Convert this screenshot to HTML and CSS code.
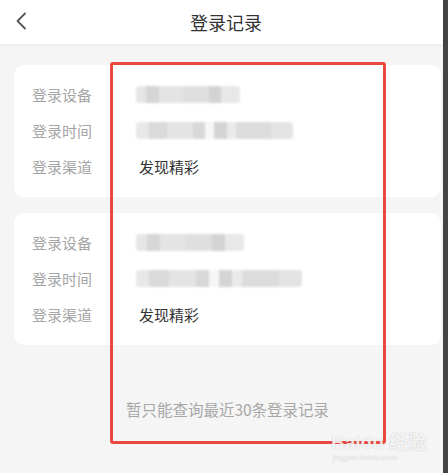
FILE: index.html
```html
<!DOCTYPE html>
<html lang="zh-CN">
<head>
    <meta charset="UTF-8">
    <meta name="viewport" content="width=device-width, initial-scale=1.0">
    <title>登录记录</title>
    <link rel="stylesheet" href="styles.css">
</head>
<body>
    <div class="screen">
        <header class="topbar">
            <svg class="back" width="12" height="18" viewBox="0 0 12 18">
                <path d="M10 1.5 L2.5 9 L10 16.5" fill="none" stroke="#555" stroke-width="1.8" stroke-linecap="round" stroke-linejoin="round"/>
            </svg>
            <h1>登录记录</h1>
        </header>
        <main class="list">
            <section class="card">
                <div class="row">
                    <span class="label">登录设备</span>
                    <span class="mosaic m-device"></span>
                </div>
                <div class="row">
                    <span class="label">登录时间</span>
                    <span class="mosaic m-time"></span>
                </div>
                <div class="row">
                    <span class="label">登录渠道</span>
                    <span class="value">发现精彩</span>
                </div>
            </section>
            <section class="card">
                <div class="row">
                    <span class="label">登录设备</span>
                    <span class="mosaic m-device wide"></span>
                </div>
                <div class="row">
                    <span class="label">登录时间</span>
                    <span class="mosaic m-time wide"></span>
                </div>
                <div class="row">
                    <span class="label">登录渠道</span>
                    <span class="value">发现精彩</span>
                </div>
            </section>
            <p class="tip">暂只能查询最近30条登录记录</p>
        </main>
        <div class="highlight"></div>
        <div class="watermark">
            <span class="wm-logo">Bai<b>du</b> 经验</span>
            <span class="wm-url">jingyan.baidu.com</span>
        </div>
    </div>
    <div class="edge"></div>
</body>
</html>
```

FILE: styles.css
```css
body {
    margin: 0;
    display: flex;
    height: 473px;
    overflow: hidden;
    background-color: #f5f5f5;
    font-family: "Noto Sans CJK SC", "Noto Sans", sans-serif;
}

.screen {
    position: relative;
    flex-grow: 1;
}

.edge {
    width: 5px;
    background-color: #444;
}

.topbar {
    height: 44px;
    display: flex;
    align-items: center;
    justify-content: center;
    position: relative;
    padding-left: 9px;
    background-color: #fff;
    box-shadow: 0 1px 4px rgba(0, 0, 0, 0.05);
}

.topbar .back {
    position: absolute;
    left: 15px;
    top: 12px;
}

.topbar h1 {
    margin: 0;
    font-size: 18px;
    font-weight: normal;
    color: #333;
}

.list {
    padding: 21px 2px 0 14px;
}

.card {
    background-color: #fff;
    border-radius: 10px;
    padding: 11px 18px 13px;
    margin-bottom: 16px;
}

.row {
    display: flex;
    align-items: center;
    height: 36px;
}

.label {
    width: 107px;
    font-size: 15px;
    color: #a6a6a6;
}

.value {
    font-size: 15px;
    color: #333;
}

.mosaic {
    height: 17px;
    margin-left: -3px;
    border-radius: 3px;
    filter: blur(1.2px);
    opacity: 0.9;
}

.m-device {
    width: 104px;
    background: linear-gradient(90deg, #e4e4e4 0 10%, #d2d2d2 10% 22%, #e2e2e2 22% 45%, #dcdcdc 45% 70%, #cfcfcf 70% 82%, #e6e6e6 82% 100%);
}

.m-time {
    width: 157px;
    background: linear-gradient(90deg, #e6e6e6 0 8%, #d6d6d6 8% 20%, #e2e2e2 20% 36%, #d4d4d4 36% 44%, #f6f6f6 44% 50%, #d0d0d0 50% 58%, #e8e8e8 58% 64%, #d9d9d9 64% 86%, #e1e1e1 86% 100%);
}

.m-device.wide {
    width: 108px;
}

.m-time.wide {
    width: 166px;
}

.tip {
    margin: 53px 0 0;
    text-align: center;
    font-size: 15.5px;
    color: #a8a8a8;
}

.highlight {
    position: absolute;
    left: 110px;
    top: 62px;
    width: 270px;
    height: 376px;
    border: 3px solid #e8483f;
    border-radius: 3px;
}

.watermark {
    position: absolute;
    left: 331px;
    top: 433px;
    display: flex;
    flex-direction: column;
    color: rgba(255, 255, 255, 0.85);
    text-shadow: 0 0 1px rgba(0, 0, 0, 0.25);
    font-family: "Liberation Sans", sans-serif;
}

.wm-logo {
    font-size: 19px;
    font-weight: bold;
    line-height: 20px;
}

.wm-url {
    font-size: 8px;
    line-height: 10px;
    margin-left: 2px;
}
```
